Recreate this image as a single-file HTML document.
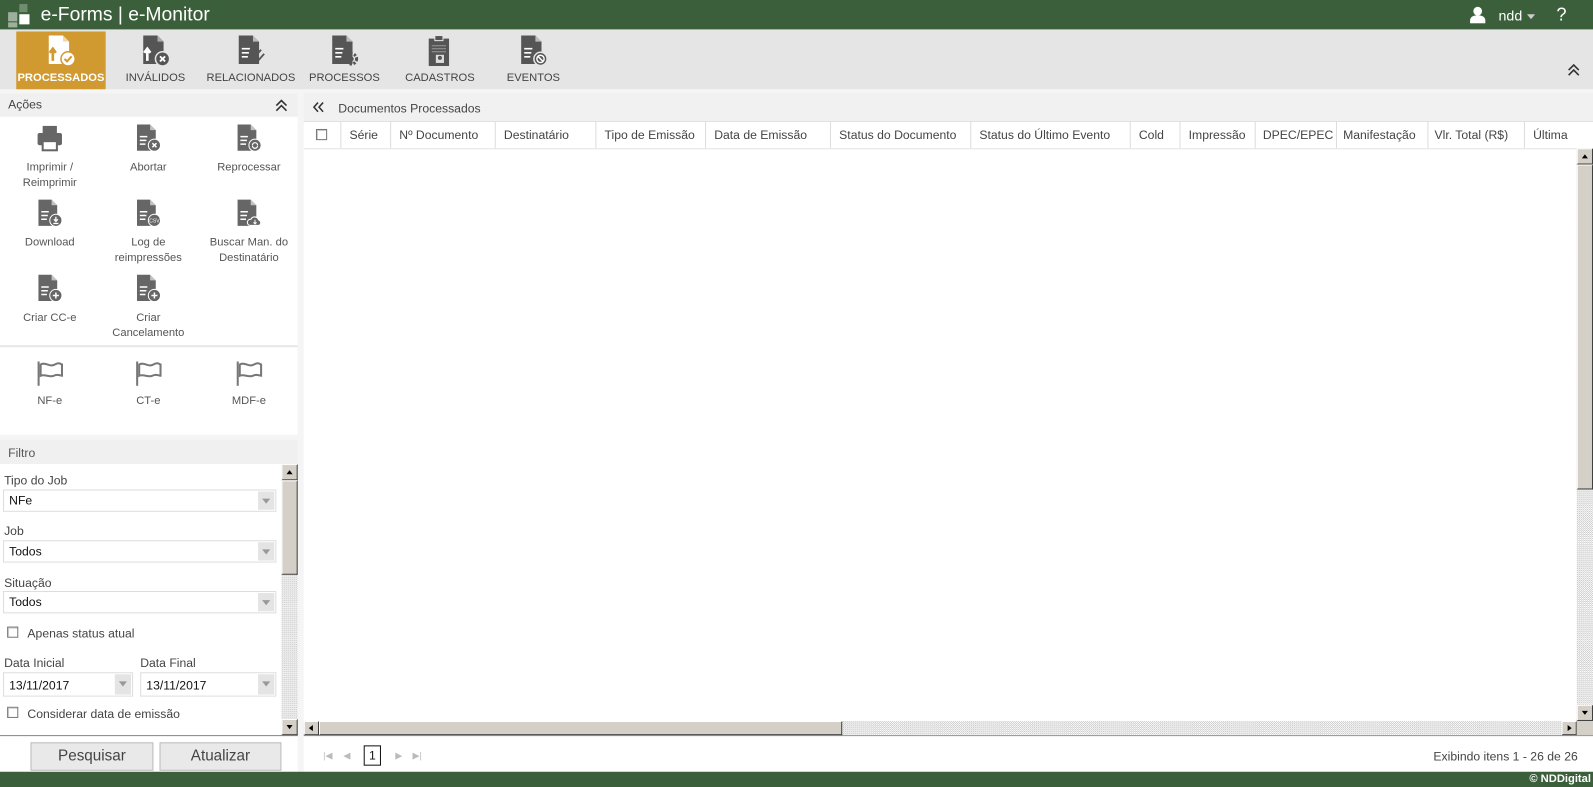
<!DOCTYPE html>
<html><head><meta charset="utf-8">
<style>
*{box-sizing:border-box;margin:0;padding:0}
html,body{width:1593px;height:787px;overflow:hidden;background:#fff}
#w{position:absolute;left:0;top:0;width:1568px;height:775px;transform:scale(1.01595,1.01548);transform-origin:0 0;font-family:"Liberation Sans","DejaVu Sans",sans-serif;color:#444;font-size:12px}
.a{position:absolute}
.hdr{left:0;top:0;width:1568px;height:29px;background:#3a5f3a}
.tb{left:0;top:29px;width:1568px;height:59px;background:#e5e5e5}
.tile{top:31px;height:57px;width:88px;text-align:center}
.tile .l{position:absolute;left:0;right:0;top:40px;font-size:11px;color:#444}
.tile svg{position:absolute;left:30px;top:4px}
.ph{background:#f0f0f0}
.act{width:98px;text-align:center;font-size:11px;line-height:15px;color:#555}
.act svg{display:block;margin:0 auto 8px}
.sel{position:absolute;left:3px;width:269px;height:22px;border:1px solid #ddd;background:#fff;font-size:12px;color:#111;padding:3px 5px}
.sel i{position:absolute;right:1px;top:1px;width:16px;height:18px;background:#e4e4e4}
.sel i:after{content:"";position:absolute;left:4px;top:7px;border:4px solid transparent;border-top:5px solid #999}
.lab{position:absolute;left:4px;font-size:12px;color:#444}
.cb{position:absolute;width:11px;height:11px;border:1px solid #777;background:#fff;box-shadow:inset 1px 1px 0 #ccc}
.stip{background:repeating-conic-gradient(#c8c8c8 0 25%,#fff 0 50%) 0 0/2px 2px}
.sbb{position:absolute;width:16px;height:16px;background:#d4d0c8;border:1px solid;border-color:#fff #404040 #404040 #fff}
.th{position:absolute;top:120px;height:26px;border-left:1px solid #ddd;font-size:12px;color:#444;padding:6px 0 0 8px;white-space:nowrap;overflow:hidden}
.btn{position:absolute;top:731px;height:28px;background:#e9e9e9;border:1px solid #bbb;font-size:15px;color:#444;text-align:center;line-height:26px}
</style></head><body><div id="w">
<svg width="0" height="0" style="position:absolute"><defs>
<symbol id="doc" viewBox="0 0 26 28"><path d="M2 0h14l6 6v22H2z" fill="currentColor"/><path d="M16 0v6h6" fill="#fff" opacity=".6"/><path d="M5 13h8M5 17h7M5 21h6" stroke="#fff" stroke-width="1.6"/></symbol>
</defs></svg>

<div class="a hdr"></div>
<div class="a" style="left:8px;top:12px;width:9px;height:9px;background:#9db09d"></div>
<div class="a" style="left:19px;top:4px;width:8px;height:8px;background:#6f8d6f"></div>
<div class="a" style="left:19px;top:14px;width:10px;height:10px;background:#fff"></div>
<div class="a" style="left:8px;top:22px;width:9px;height:5px;background:#9db09d"></div>
<div class="a" style="left:40px;top:4px;font-size:19px;color:#fff">e-Forms | e-Monitor</div>
<svg class="a" style="left:1446px;top:6px" width="17" height="17" viewBox="0 0 17 17"><circle cx="8.5" cy="5" r="4.3" fill="#fff"/><path d="M1 17v-3c0-3 3-5 7.5-5S16 11 16 14v3z" fill="#fff"/></svg>
<div class="a" style="left:1475px;top:7px;font-size:14px;color:#fff">ndd</div>
<div class="a" style="left:1503px;top:14px;border:4px solid transparent;border-top:5px solid #ccc"></div>
<div class="a" style="left:1532px;top:4px;font-size:18px;color:#fff">?</div>

<div class="a tb"></div>
<div class="a tile" style="left:16px;background:#d09a30">
<svg width="30" height="32" viewBox="0 0 30 32"><path d="M2 0h14l6 6v22H2z" fill="#fff"/><path d="M16 0v6h6" fill="#f0d9a8"/><path d="M6 25V14M3 17l3-4 3 4" stroke="#d09a30" stroke-width="2.6" fill="none"/><circle cx="21" cy="23" r="7" fill="#fff" stroke="#d09a30" stroke-width="1.5"/><path d="M17.5 23l2.5 2.5 4.5-5" stroke="#d09a30" stroke-width="2" fill="none"/></svg>
<div class="l" style="color:#fff;font-weight:bold">PROCESSADOS</div></div>
<div class="a tile" style="left:109px"><svg width="30" height="32" viewBox="0 0 30 32"><path d="M2 0h14l6 6v22H2z" fill="#555"/><path d="M16 0v6h6" fill="#aaa"/><path d="M6 25V14M3 17l3-4 3 4" stroke="#fff" stroke-width="2.6" fill="none"/><circle cx="21" cy="23" r="7" fill="#555" stroke="#e5e5e5" stroke-width="1.5"/><path d="M18.5 20.5l5 5M23.5 20.5l-5 5" stroke="#fff" stroke-width="1.8"/></svg><div class="l">INVÁLIDOS</div></div>
<div class="a tile" style="left:203px"><svg width="30" height="32" viewBox="0 0 30 32"><use href="#doc" width="26" height="28" style="color:#555"/><path d="M24 14l-8 9a2.5 2.5 0 0 0 4 3l7-8" stroke="#555" stroke-width="1.8" fill="none"/></svg><div class="l">RELACIONADOS</div></div>
<div class="a tile" style="left:295px"><svg width="30" height="32" viewBox="0 0 30 32"><use href="#doc" width="26" height="28" style="color:#555"/><circle cx="21" cy="23" r="5" fill="none" stroke="#555" stroke-width="3" stroke-dasharray="2.2 1.5"/><circle cx="21" cy="23" r="2.2" fill="#555"/></svg><div class="l">PROCESSOS</div></div>
<div class="a tile" style="left:389px"><svg width="30" height="32" viewBox="0 0 30 32"><rect x="3" y="3" width="20" height="27" fill="#555"/><rect x="9" y="0" width="8" height="5" fill="#555" stroke="#e5e5e5"/><path d="M6 10h14M6 13h14M6 16h14" stroke="#999"/><rect x="10" y="19" width="8" height="8" fill="#ddd"/><circle cx="14" cy="22" r="2" fill="#555"/></svg><div class="l">CADASTROS</div></div>
<div class="a tile" style="left:481px"><svg width="30" height="32" viewBox="0 0 30 32"><use href="#doc" width="26" height="28" style="color:#555"/><circle cx="21" cy="23" r="6.5" fill="#555" stroke="#e5e5e5" stroke-width="1.5"/><circle cx="21" cy="23" r="3.6" fill="none" stroke="#fff" stroke-width="1.4"/><path d="M18.5 20.5l5 5" stroke="#fff" stroke-width="1.4"/></svg><div class="l">EVENTOS</div></div>
<svg class="a" style="left:1543px;top:63px" width="12" height="12" viewBox="0 0 12 12"><path d="M1 6l5-5 5 5M1 11l5-5 5 5" stroke="#333" stroke-width="1.6" fill="none"/></svg>

<div class="a" style="left:0;top:88px;width:1568px;height:672px;background:#f5f5f5"></div>
<!-- left -->
<div class="a ph" style="left:0;top:92px;width:293px;height:23px"></div>
<div class="a" style="left:8px;top:96px;font-size:12px;color:#444">Ações</div>
<svg class="a" style="left:271px;top:98px" width="12" height="12" viewBox="0 0 12 12"><path d="M1 6l5-5 5 5M1 11l5-5 5 5" stroke="#333" stroke-width="1.6" fill="none"/></svg>
<div class="a" style="left:0;top:115px;width:293px;height:225px;background:#fff"></div>
<div class="a" style="left:0;top:340px;width:293px;height:2px;background:#e6e6e6"></div>
<div class="a" style="left:0;top:342px;width:293px;height:86px;background:#fff"></div>

<div class="a act" style="left:0;top:122px"><svg width="26" height="28" viewBox="0 0 26 28"><rect x="6" y="2" width="14" height="8" fill="#666"/><rect x="1" y="9" width="24" height="12" rx="2" fill="#666"/><rect x="6" y="17" width="14" height="9" fill="#fff" stroke="#666" stroke-width="2"/></svg>Imprimir /<br>Reimprimir</div>
<div class="a act" style="left:97px;top:122px"><svg width="26" height="28" viewBox="0 0 26 28"><use href="#doc" width="24" height="27" style="color:#666"/><circle cx="19" cy="21" r="6" fill="#666" stroke="#fff"/><path d="M17 19l4 4M21 19l-4 4" stroke="#fff" stroke-width="1.5"/></svg>Abortar</div>
<div class="a act" style="left:196px;top:122px"><svg width="26" height="28" viewBox="0 0 26 28"><use href="#doc" width="24" height="27" style="color:#666"/><circle cx="19" cy="21" r="6" fill="#666" stroke="#fff"/><path d="M16.5 21a2.5 2.5 0 0 1 5 0M21.5 21.5a2.5 2.5 0 0 1-5 0" stroke="#fff" stroke-width="1.2" fill="none"/></svg>Reprocessar</div>
<div class="a act" style="left:0;top:196px"><svg width="26" height="28" viewBox="0 0 26 28"><use href="#doc" width="24" height="27" style="color:#666"/><circle cx="19" cy="21" r="6" fill="#666" stroke="#fff"/><path d="M19 17.5v4M17 20l2 2 2-2M16.5 24h5" stroke="#fff" stroke-width="1.3" fill="none"/></svg>Download</div>
<div class="a act" style="left:97px;top:196px"><svg width="26" height="28" viewBox="0 0 26 28"><use href="#doc" width="24" height="27" style="color:#666"/><circle cx="19" cy="21" r="6" fill="#666" stroke="#fff"/><text x="19" y="23" font-size="5" fill="#fff" text-anchor="middle" font-family="Liberation Sans">CSV</text></svg>Log de<br>reimpressões</div>
<div class="a act" style="left:196px;top:196px"><svg width="26" height="28" viewBox="0 0 26 28"><use href="#doc" width="24" height="27" style="color:#666"/><path d="M14 26a3 3 0 0 1 1-6 4 4 0 0 1 7.5 0.5 3 3 0 0 1 0.5 5.5z" fill="#666" stroke="#fff"/><path d="M19 20.5v4M17.5 23l1.5 1.5 1.5-1.5" stroke="#fff" fill="none"/></svg>Buscar Man. do<br>Destinatário</div>
<div class="a act" style="left:0;top:270px"><svg width="26" height="28" viewBox="0 0 26 28"><use href="#doc" width="24" height="27" style="color:#666"/><circle cx="19" cy="21" r="6" fill="#666" stroke="#fff"/><path d="M19 18v6M16 21h6" stroke="#fff" stroke-width="1.5"/></svg>Criar CC-e</div>
<div class="a act" style="left:97px;top:270px"><svg width="26" height="28" viewBox="0 0 26 28"><use href="#doc" width="24" height="27" style="color:#666"/><circle cx="19" cy="21" r="6" fill="#666" stroke="#fff"/><path d="M19 18v6M16 21h6" stroke="#fff" stroke-width="1.5"/></svg>Criar<br>Cancelamento</div>

<div class="a act" style="left:0;top:354px"><svg width="28" height="26" viewBox="0 0 28 26"><path d="M3 2v24" stroke="#777" stroke-width="2"/><path d="M5 5c5-3 9 3 14 0s6 0 7 0v11c-2 0-4-2-8 0s-9-2-13 0z" fill="none" stroke="#777" stroke-width="2"/></svg>NF-e</div>
<div class="a act" style="left:97px;top:354px"><svg width="28" height="26" viewBox="0 0 28 26"><path d="M3 2v24" stroke="#777" stroke-width="2"/><path d="M5 5c5-3 9 3 14 0s6 0 7 0v11c-2 0-4-2-8 0s-9-2-13 0z" fill="none" stroke="#777" stroke-width="2"/></svg>CT-e</div>
<div class="a act" style="left:196px;top:354px"><svg width="28" height="26" viewBox="0 0 28 26"><path d="M3 2v24" stroke="#777" stroke-width="2"/><path d="M5 5c5-3 9 3 14 0s6 0 7 0v11c-2 0-4-2-8 0s-9-2-13 0z" fill="none" stroke="#777" stroke-width="2"/></svg>MDF-e</div>

<div class="a ph" style="left:0;top:433px;width:293px;height:24px"></div>
<div class="a" style="left:8px;top:439px;font-size:12px;color:#555">Filtro</div>
<div class="a" style="left:0;top:457px;width:293px;height:267px;background:#fff"></div>
<div class="a stip" style="left:277px;top:457px;width:16px;height:267px"></div>
<div class="sbb" style="left:277px;top:457px"></div>
<div class="a" style="left:282px;top:463px;border:3px solid transparent;border-bottom:4px solid #000;border-top:0"></div>
<div class="a" style="left:277px;top:473px;width:16px;height:93px;background:#d4d0c8;border:1px solid;border-color:#fff #404040 #404040 #fff"></div>
<div class="sbb" style="left:277px;top:708px"></div>
<div class="a" style="left:282px;top:714px;border:3px solid transparent;border-top:4px solid #000;border-bottom:0"></div>

<div class="lab" style="top:466px">Tipo do Job</div>
<div class="sel" style="top:482px">NFe<i></i></div>
<div class="lab" style="top:516px">Job</div>
<div class="sel" style="top:532px">Todos<i></i></div>
<div class="lab" style="top:567px">Situação</div>
<div class="sel" style="top:582px">Todos<i></i></div>
<div class="cb" style="left:7px;top:617px"></div>
<div class="lab" style="left:27px;top:617px">Apenas status atual</div>
<div class="lab" style="top:646px">Data Inicial</div>
<div class="lab" style="left:138px;top:646px">Data Final</div>
<div class="sel" style="top:662px;width:128px;height:24px;padding-top:5px">13/11/2017<i style="height:20px"></i></div>
<div class="sel" style="left:138px;top:662px;width:134px;height:24px;padding-top:5px">13/11/2017<i style="height:20px"></i></div>
<div class="cb" style="left:7px;top:696px"></div>
<div class="lab" style="left:27px;top:696px">Considerar data de emissão</div>
<div class="a" style="left:0;top:724px;width:293px;height:1px;background:#777"></div>
<div class="a" style="left:0;top:725px;width:293px;height:35px;background:#fff"></div>
<div class="btn" style="left:30px;width:121px">Pesquisar</div>
<div class="btn" style="left:157px;width:120px">Atualizar</div>

<!-- right -->
<div class="a" style="left:299px;top:92px;width:1269px;height:27px;background:#f1f1f1"></div>
<svg class="a" style="left:308px;top:100px" width="11" height="11" viewBox="0 0 11 11"><path d="M5 1L1 5.5 5 10M10 1L6 5.5 10 10" stroke="#333" stroke-width="1.5" fill="none"/></svg>
<div class="a" style="left:333px;top:100px;font-size:12px;color:#444">Documentos Processados</div>
<div class="a" style="left:299px;top:119px;width:1269px;height:605px;background:#fff;border-top:1px solid #ddd"></div>
<div class="a" style="left:299px;top:146px;width:1253px;height:1px;background:#e2e2e2"></div>
<div class="cb" style="left:311px;top:127px"></div>
<div class="th" style="left:335px;width:49px">Série</div>
<div class="th" style="left:384px;width:103px">Nº Documento</div>
<div class="th" style="left:487px;width:99px">Destinatário</div>
<div class="th" style="left:586px;width:108px">Tipo de Emissão</div>
<div class="th" style="left:694px;width:123px">Data de Emissão</div>
<div class="th" style="left:817px;width:138px">Status do Documento</div>
<div class="th" style="left:955px;width:157px">Status do Último Evento</div>
<div class="th" style="left:1112px;width:49px">Cold</div>
<div class="th" style="left:1161px;width:74px">Impressão</div>
<div class="th" style="left:1235px;width:80px;padding-left:7px">DPEC/EPEC</div>
<div class="th" style="left:1315px;width:90px;padding-left:6px">Manifestação</div>
<div class="th" style="left:1405px;width:95px;padding-left:6px">Vlr. Total (R$)</div>
<div class="th" style="left:1500px;width:52px">Última</div>

<div class="a stip" style="left:1552px;top:146px;width:16px;height:564px"></div>
<div class="sbb" style="left:1552px;top:146px"></div>
<div class="a" style="left:1557px;top:152px;border:3px solid transparent;border-bottom:4px solid #000;border-top:0"></div>
<div class="a" style="left:1552px;top:162px;width:16px;height:320px;background:#d4d0c8;border:1px solid;border-color:#fff #404040 #404040 #fff"></div>
<div class="sbb" style="left:1552px;top:694px"></div>
<div class="a" style="left:1557px;top:700px;border:3px solid transparent;border-top:4px solid #000;border-bottom:0"></div>
<div class="a stip" style="left:299px;top:710px;width:1253px;height:14px"></div>
<div class="sbb" style="left:299px;top:710px;height:14px;width:15px"></div>
<div class="a" style="left:304px;top:714px;border:3px solid transparent;border-right:4px solid #000;border-left:0"></div>
<div class="a" style="left:314px;top:710px;width:515px;height:14px;background:#d4d0c8;border:1px solid;border-color:#fff #404040 #404040 #fff"></div>
<div class="sbb" style="left:1537px;top:710px;height:14px;width:15px"></div>
<div class="a" style="left:1543px;top:714px;border:3px solid transparent;border-left:4px solid #000;border-right:0"></div>
<div class="a" style="left:1552px;top:710px;width:16px;height:14px;background:#d4d0c8"></div>
<div class="a" style="left:299px;top:724px;width:1269px;height:1px;background:#888"></div>
<div class="a" style="left:299px;top:725px;width:1269px;height:35px;background:#fff"></div>
<div class="a" style="left:318px;top:739px;font-size:9px;color:#bbb">|◀</div>
<div class="a" style="left:338px;top:739px;font-size:9px;color:#bbb">◀</div>
<div class="a" style="left:358px;top:734px;width:17px;height:20px;border:1px solid #111;font-size:12px;color:#111;text-align:center;line-height:18px">1</div>
<div class="a" style="left:389px;top:739px;font-size:9px;color:#bbb">▶</div>
<div class="a" style="left:406px;top:739px;font-size:9px;color:#bbb">▶|</div>
<div class="a" style="right:15px;top:738px;font-size:12px;color:#444">Exibindo itens 1 - 26 de 26</div>

<div class="a" style="left:0;top:760px;width:1568px;height:15px;background:#3a5f3a"></div>
<div class="a" style="right:2px;top:761px;font-size:11px;color:#fff;font-weight:bold">© NDDigital</div>
</div></body></html>
